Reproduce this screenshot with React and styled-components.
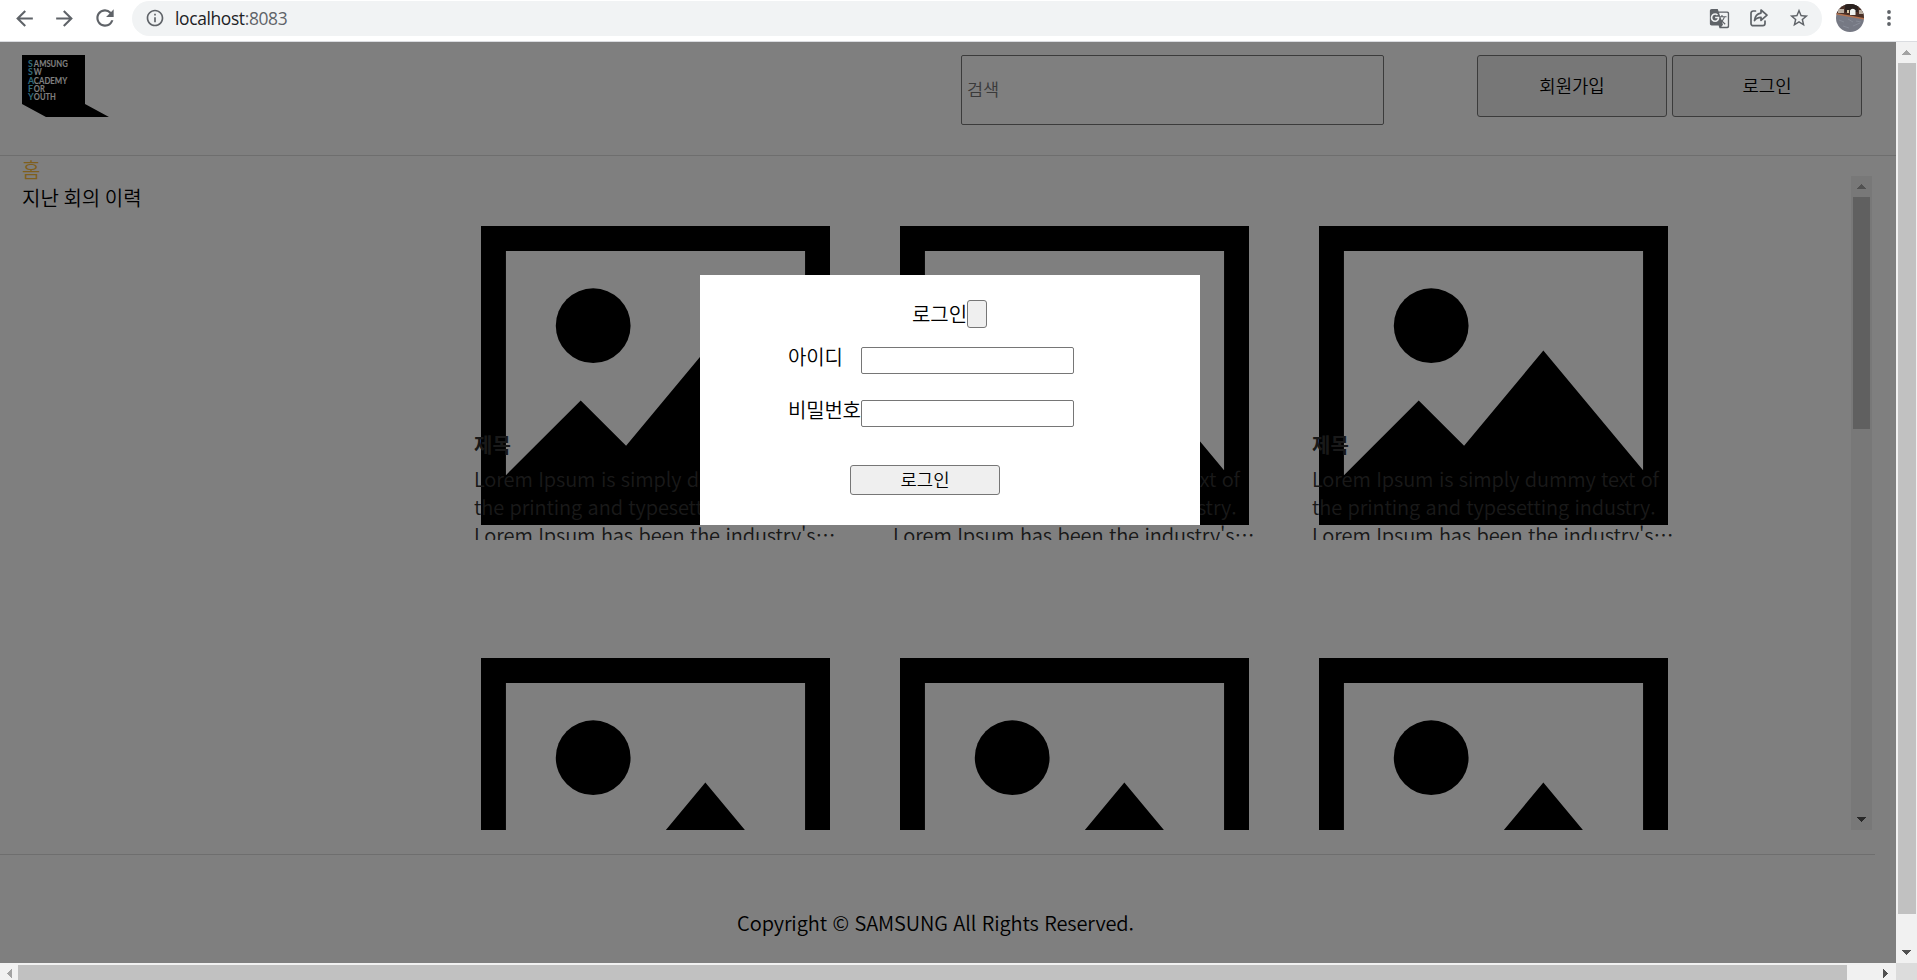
import React from "react";
import styled, { createGlobalStyle } from "styled-components";
import {
  MdArrowBack,
  MdArrowForward,
  MdRefresh,
  MdInfoOutline,
  MdGTranslate,
  MdStarBorder,
} from "react-icons/md";

const GlobalStyle = createGlobalStyle`
  * { box-sizing: border-box; }
  body {
    margin: 0;
    overflow: hidden;
    font-family: "Noto Sans CJK KR", "Noto Sans", sans-serif;
    font-weight: 350;
    font-size: 20px;
    line-height: 28px;
    color: #000;
  }
  button, input { font: inherit; color: inherit; margin: 0; }
`;

const Window = styled.div`
  width: 1917px;
  height: 980px;
  overflow: hidden;
  display: flex;
  flex-direction: column;
  background: #fff;
`;

/* Browser toolbar */
const Toolbar = styled.div`
  flex: none;
  height: 42px;
  display: flex;
  align-items: flex-start;
  padding: 1px 0 0 12px;
  border-bottom: 1px solid #dadce0;
  color: #5f6368;
`;
const NavIcons = styled.div`
  display: flex;
  align-items: center;
  gap: 15px;
  height: 34px;
  width: 120px;
`;
const AddressBar = styled.div`
  width: 1690px;
  height: 35px;
  padding: 0 12px 1px 13px;
  display: flex;
  align-items: center;
  border-radius: 18px;
  background: #f1f3f4;
`;
const Url = styled.div`
  flex: 1;
  margin-left: 10px;
  font-family: "Open Sans", "Noto Sans", sans-serif;
  font-size: 17.4px;
  font-weight: 400;
  letter-spacing: -0.35px;
  color: #5f6368;
`;
const Host = styled.span`
  color: #202124;
`;
const BarIcons = styled.div`
  display: flex;
  align-items: center;
  gap: 18px;
`;
const Profile = styled.div`
  height: 34px;
  display: flex;
  align-items: center;
  margin-left: 14px;
  gap: 22px;
`;

/* Viewport and scrollbars */
const Row = styled.div`
  display: flex;
  flex: none;
`;
const Viewport = styled.div`
  position: relative;
  width: 1896px;
  height: 921px;
  overflow: hidden;
  background: #fff;
`;
const Track = styled.div`
  flex: none;
  display: flex;
  align-items: center;
  flex-direction: ${(p) => (p.$horizontal ? "row" : "column")};
  width: ${(p) => (p.$horizontal ? "1896px" : "21px")};
  height: ${(p) => (p.$horizontal ? "21px" : "auto")};
  background: #f1f1f1;
`;
const TrackEnd = styled.div`
  flex: none;
  width: ${(p) => p.$w || 21}px;
  height: 21px;
  display: flex;
  align-items: center;
  justify-content: center;
  margin: ${(p) => (p.$last ? "auto 0 0 auto" : "0")};
`;
const Thumb = styled.div`
  flex: none;
  background: #c1c1c1;
  width: ${(p) => p.$w}px;
  height: ${(p) => p.$h}px;
`;
const Corner = styled.div`
  width: 21px;
  height: 21px;
  background: #dcdcdc;
`;

/* Site */
const Header = styled.header`
  display: flex;
  height: 114px;
  padding: 13px 34px 0 22px;
  border-bottom: 1px solid #dcdcdc;
`;
const Search = styled.input`
  width: 423px;
  height: 70px;
  margin-left: 852px;
  padding: 0 5px 4px;
  border: 1px solid #767676;
  border-radius: 2px;
  background: #fff;
  font-size: 17.5px;
  &::placeholder { color: #757575; opacity: 1; }
`;
const HeaderButtons = styled.div`
  display: flex;
  gap: 5px;
  margin-left: auto;
`;
const Button = styled.button`
  width: ${(p) => p.$w}px;
  height: ${(p) => p.$h}px;
  padding: 0 0 2px;
  border: 1px solid #767676;
  border-radius: 3px;
  background: #efefef;
  font-size: 17.8px;
  line-height: 24px;
`;
const Body = styled.div`
  display: flex;
  height: 698px;
`;
const Sidebar = styled.nav`
  width: 474px;
  padding-left: 22px;
  word-spacing: -1px;
`;
const MenuItem = styled.div`
  color: ${(p) => (p.$active ? "#ffbe3c" : "#000")};
`;
const Gallery = styled.main`
  display: flex;
  width: 1398px;
  height: 654px;
  margin-top: 20px;
  overflow: hidden;
`;
const Cards = styled.div`
  flex: 1;
  display: grid;
  grid-template-columns: repeat(3, 349px);
  grid-auto-rows: 431.7px;
  column-gap: 70px;
  padding: 50px 0 0 7px;
`;
const Card = styled.article`
  svg { display: block; }
`;
const CardText = styled.div`
  position: relative;
  width: 370px;
  height: 109px;
  margin: -94px 0 0 -7px;
  overflow: hidden;
  color: #333;
`;
const CardTitle = styled.div`
  font-weight: 700;
  margin-bottom: 6px;
`;
const Line = styled.div`
  white-space: nowrap;
  letter-spacing: -0.11px;
`;
const Footer = styled.footer`
  width: 1875px;
  height: 140px;
  padding-top: 54px;
  border-top: 1px solid #dcdcdc;
  text-align: center;
  padding-right: 4px;
  letter-spacing: -0.1px;
`;

/* Login dialog */
const Overlay = styled.div`
  position: absolute;
  inset: 0;
  padding: 233px 0 0 700px;
  background: rgba(0, 0, 0, 0.5);
`;
const Dialog = styled.form`
  width: 500px;
  height: 250px;
  padding-top: 25px;
  background: #fff;
`;
const DialogTitle = styled.div`
  display: flex;
  justify-content: center;
  height: 28px;
  padding-right: 1px;
`;
const Field = styled.label`
  display: flex;
  height: 27px;
  margin: ${(p) => p.$top}px 0 0 88px;
`;
const FieldName = styled.span`
  width: 73px;
  margin-top: -4px;
  white-space: nowrap;
  letter-spacing: -0.2px;
`;
const Input = styled.input`
  width: 213px;
  height: 27px;
  border: 1px solid #767676;
  border-radius: 2px;
  background: #fff;
`;
const Submit = styled.div`
  margin: 38px 0 0 150px;
  display: flex;
`;

const Arrow = ({ dir, color = "#505050" }) => {
  const shapes = {
    up: "M4 0h1v1h1v1h1v1h1v1h1v1H0V4h1V3h1V2h1V1h1z",
    down: "M4 5h1V4h1V3h1V2h1V1h1V0H0v1h1v1h1v1h1v1h1z",
    left: "M0 4v1h1v1h1v1h1v1h1v1h1V0H4v1H3v1H2v1H1v1z",
    right: "M5 4v1H4v1H3v1H2v1H1v1H0V0h1v1h1v1h1v1h1v1z",
  };
  const tall = dir === "left" || dir === "right";
  return (
    <svg width={tall ? 5 : 9} height={tall ? 9 : 5} shapeRendering="crispEdges">
      <path d={shapes[dir]} fill={color} />
    </svg>
  );
};

const ShareIcon = () => (
  <svg width="22" height="22" viewBox="0 0 22 22" fill="none" stroke="#5f6368" strokeWidth="1.7" strokeLinejoin="round" strokeLinecap="round">
    <path d="M7.500 4H5.200A2.200 2.200 0 0 0 3 6.200V16.500A2.200 2.200 0 0 0 5.200 18.700H14.800A2.200 2.200 0 0 0 17 16.500V14" />
    <path d="M13 3l6 5.200-6 5.200v-3.100c-3 0-5 .9-6.500 3.200C6.900 9.500 9 6.600 13 6.100z" />
  </svg>
);

const Avatar = () => (
  <svg width="28" height="28" viewBox="0 0 28 28">
    <defs>
      <clipPath id="face"><circle cx="14" cy="14" r="14" /></clipPath>
    </defs>
    <g clipPath="url(#face)">
      <path d="M0 0h28v28H0z" fill="#767984" />
      <path d="M0 0h28v15L0 9.500z" fill="#4a3026" />
      <path d="M9 0h13v8H9z" fill="#2a211f" />
      <path d="M0 9l28 5v1.500L0 10.500z" fill="#b5734f" />
      <path d="M2 5h6v4H2zM23 6h5v4h-5z" fill="#b9ada0" />
      <path d="M14 11V6.500a3 3 0 0 1 5.500 0V11z" fill="#eef3f0" />
      <path d="M11 6h2v3h-2z" fill="#d9c9a8" />
      <path d="M3 16l5 2M12 15l5 3M7 22l6 2M17 22l7-3M20 17l5 1" stroke="#868a95" strokeWidth="1" />
    </g>
  </svg>
);

const Dots = () => (
  <svg width="6" height="18" fill="#5f6368">
    <circle cx="3" cy="3" r="1.900" />
    <circle cx="3" cy="9" r="1.900" />
    <circle cx="3" cy="15" r="1.900" />
  </svg>
);

const LOGO_LINES = [
  ["S", "AMSUNG", 34],
  ["S", "W", 8],
  ["A", "CADEMY", 33.5],
  ["F", "OR", 11],
  ["Y", "OUTH", 22],
];

const Logo = () => (
  <svg width="87" height="62" viewBox="0 0 87 62">
    <path d="M0 0h63v49l24 13H24L0 49z" fill="#000" />
    <g fontFamily="Lato, sans-serif" fontWeight="700" fontSize="8.800">
      {LOGO_LINES.map(([first, rest, width], i) => (
        <React.Fragment key={i}>
          <text x="6" y={12.2 + i * 8.25} fill="#62d4f4">{first}</text>
          <text x="11.800" y={12.2 + i * 8.25} fill="#fff" textLength={width} lengthAdjust="spacingAndGlyphs">{rest}</text>
        </React.Fragment>
      ))}
    </g>
  </svg>
);

const Placeholder = () => (
  <svg width="349" height="299" viewBox="0 0 14 12" preserveAspectRatio="none">
    <path
      fillRule="evenodd"
      d="M0 0H14V12H0ZM1 1V10L4 7L5.820 8.820L9 5L13 9.800V1Z"
    />
    <circle cx="4.500" cy="4" r="1.500" />
  </svg>
);

const MeetingCard = () => (
  <Card>
    <Placeholder />
    <CardText>
      <CardTitle>제목</CardTitle>
      <Line>Lorem Ipsum is simply dummy text of</Line>
      <Line>the printing and typesetting industry.</Line>
      <Line>Lorem Ipsum has been the industry's⋯</Line>
    </CardText>
  </Card>
);

export default function App() {
  return (
    <Window lang="ko">
      <GlobalStyle />
      <Toolbar>
        <NavIcons>
          <MdArrowBack size={25} />
          <MdArrowForward size={25} />
          <MdRefresh size={26} />
        </NavIcons>
        <AddressBar>
          <MdInfoOutline size={20} />
          <Url><Host>localhost</Host>:8083</Url>
          <BarIcons>
            <MdGTranslate size={21} />
            <ShareIcon />
            <MdStarBorder size={22} />
          </BarIcons>
        </AddressBar>
        <Profile>
          <Avatar />
          <Dots />
        </Profile>
      </Toolbar>
      <Row>
        <Viewport>
          <Header>
            <Logo />
            <Search placeholder="검색" />
            <HeaderButtons>
              <Button $w={190} $h={62}>회원가입</Button>
              <Button $w={190} $h={62}>로그인</Button>
            </HeaderButtons>
          </Header>
          <Body>
            <Sidebar>
              <MenuItem $active>홈</MenuItem>
              <MenuItem>지난 회의 이력</MenuItem>
            </Sidebar>
            <Gallery>
              <Cards>
                {Array.from({ length: 6 }, (_, i) => <MeetingCard key={i} />)}
              </Cards>
              <Track>
                <TrackEnd><Arrow dir="up" color="#a3a3a3" /></TrackEnd>
                <Thumb $w={17} $h={232} />
                <TrackEnd $last><Arrow dir="down" /></TrackEnd>
              </Track>
            </Gallery>
          </Body>
          <Footer>Copyright © SAMSUNG All Rights Reserved.</Footer>
          <Overlay>
            <Dialog onSubmit={(e) => e.preventDefault()}>
              <DialogTitle>
                로그인
                <Button type="button" $w={20} $h={28} aria-label="닫기" />
              </DialogTitle>
              <Field $top={19}>
                <FieldName>아이디</FieldName>
                <Input />
              </Field>
              <Field $top={26}>
                <FieldName>비밀번호</FieldName>
                <Input type="password" />
              </Field>
              <Submit>
                <Button $w={150} $h={30}>로그인</Button>
              </Submit>
            </Dialog>
          </Overlay>
        </Viewport>
        <Track>
          <TrackEnd><Arrow dir="up" color="#a3a3a3" /></TrackEnd>
          <Thumb $w={18} $h={851} />
          <TrackEnd $last><Arrow dir="down" /></TrackEnd>
        </Track>
      </Row>
      <Row>
        <Track $horizontal>
          <TrackEnd $w={18}><Arrow dir="left" color="#a3a3a3" /></TrackEnd>
          <Thumb $w={1829} $h={17} />
          <TrackEnd $last><Arrow dir="right" /></TrackEnd>
        </Track>
        <Corner />
      </Row>
    </Window>
  );
}
